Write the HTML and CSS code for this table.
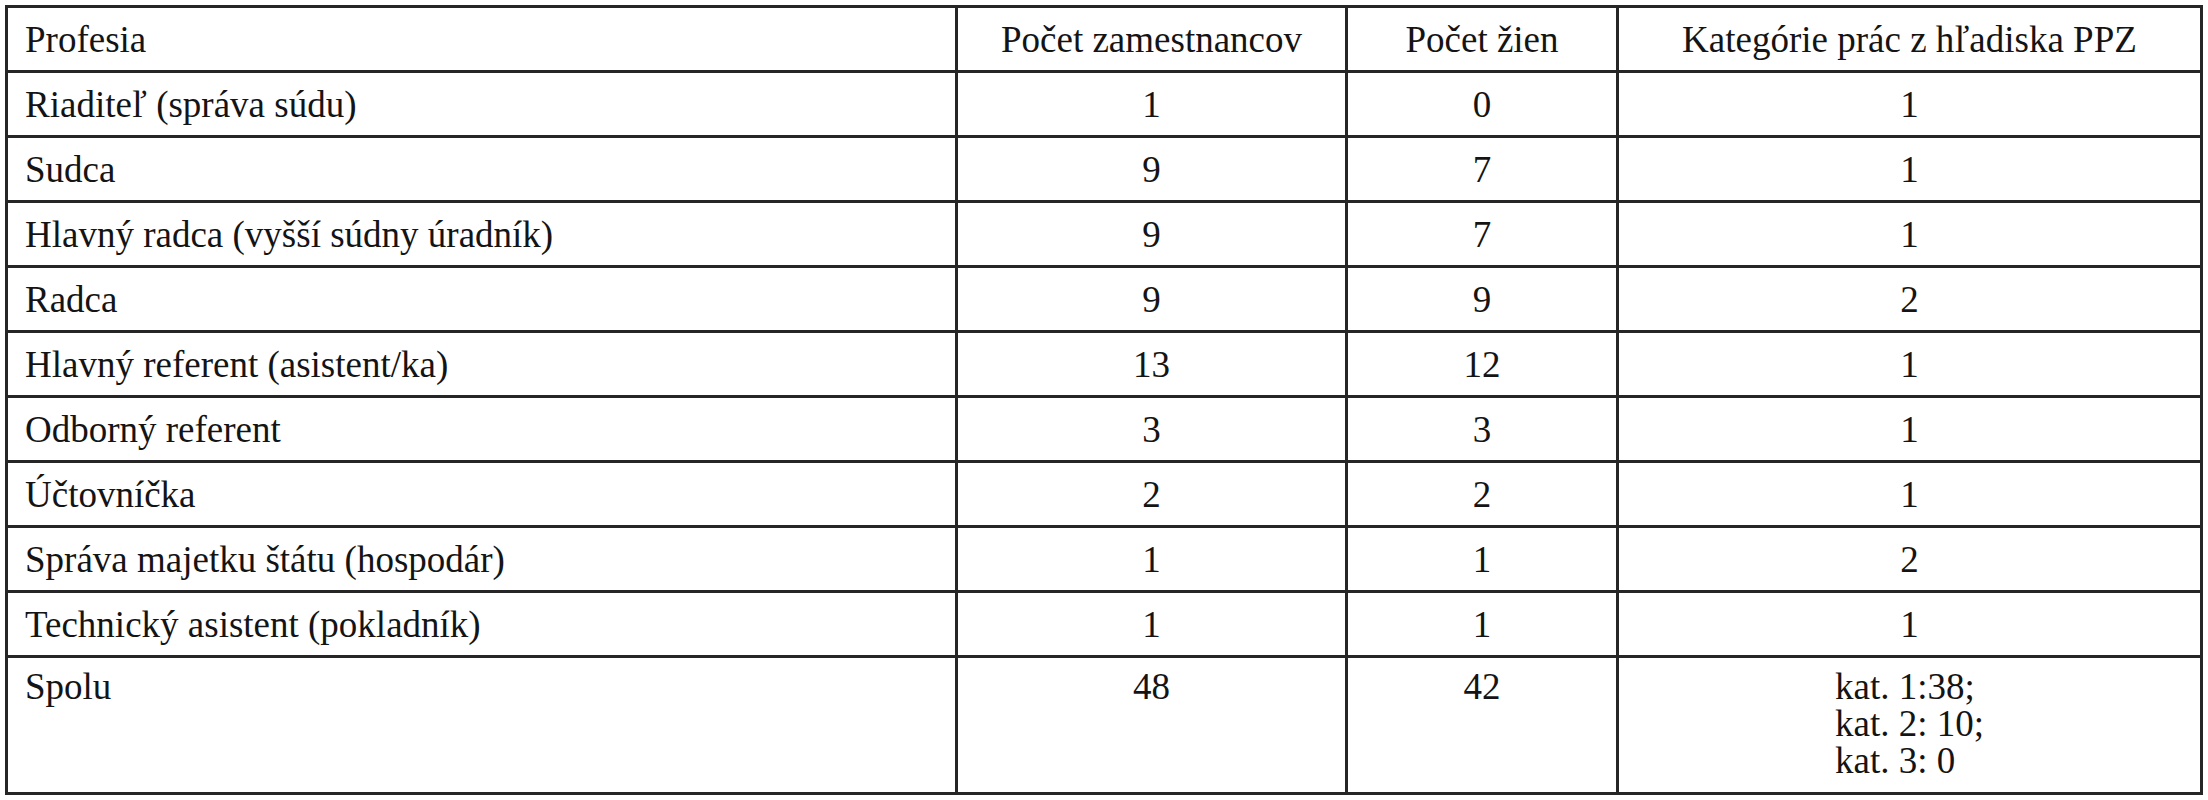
FILE: index.html
```html
<!DOCTYPE html>
<html>
<head>
<meta charset="utf-8">
<title>Profesie</title>
<link rel="stylesheet" href="styles.css">
</head>
<body>
<div class="grid" role="table">
  <div class="cell name head">Profesia</div>
  <div class="cell head">Počet zamestnancov</div>
  <div class="cell head">Počet žien</div>
  <div class="cell head">Kategórie prác z hľadiska PPZ</div>

  <div class="cell name">Riaditeľ (správa súdu)</div><div class="cell">1</div><div class="cell">0</div><div class="cell">1</div>
  <div class="cell name">Sudca</div><div class="cell">9</div><div class="cell">7</div><div class="cell">1</div>
  <div class="cell name">Hlavný radca (vyšší súdny úradník)</div><div class="cell">9</div><div class="cell">7</div><div class="cell">1</div>
  <div class="cell name">Radca</div><div class="cell">9</div><div class="cell">9</div><div class="cell">2</div>
  <div class="cell name">Hlavný referent (asistent/ka)</div><div class="cell">13</div><div class="cell">12</div><div class="cell">1</div>
  <div class="cell name">Odborný referent</div><div class="cell">3</div><div class="cell">3</div><div class="cell">1</div>
  <div class="cell name">Účtovníčka</div><div class="cell">2</div><div class="cell">2</div><div class="cell">1</div>
  <div class="cell name">Správa majetku štátu (hospodár)</div><div class="cell">1</div><div class="cell">1</div><div class="cell">2</div>
  <div class="cell name">Technický asistent (pokladník)</div><div class="cell">1</div><div class="cell">1</div><div class="cell">1</div>

  <div class="cell name total">Spolu</div>
  <div class="cell total">48</div>
  <div class="cell total">42</div>
  <div class="cell total"><div class="cats"><span>kat. 1:38;</span><span>kat. 2: 10;</span><span>kat. 3: 0</span></div></div>
</div>
</body>
</html>
```

FILE: styles.css
```css
html, body {
  margin: 0;
  background: #ffffff;
}

body {
  padding: 5px 0 0 5px;
  font-family: "Liberation Serif", "Times New Roman", serif;
  font-size: 37px;
  color: #141414;
}

.grid {
  display: grid;
  grid-template-columns: 947px 387px 268px 581px;
  grid-template-rows: repeat(10, 62px) 134px;
  gap: 3px;
  padding: 3px;
  width: max-content;
  background: #262626;
  font-family: "Liberation Serif", "Times New Roman", serif;
}

.cell {
  background: #ffffff;
  padding-top: 2px;
  line-height: 60px;
  text-align: center;
  white-space: nowrap;
  font-family: "Liberation Serif", "Times New Roman", serif;
  color: #141414;
}

.name {
  text-align: left;
  padding-left: 17px;
}

.total {
  padding-top: 10px;
  line-height: 37px;
}

.cats {
  display: inline-flex;
  flex-direction: column;
  align-items: flex-start;
  text-align: left;
}
```
